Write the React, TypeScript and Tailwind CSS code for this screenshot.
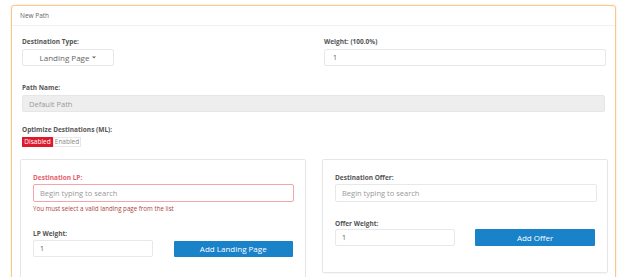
import { useState } from "react";

const Label = ({ children, error }: { children: React.ReactNode; error?: boolean }) => (
  <div className={`text-[6.5px] font-bold leading-[9px] ${error ? "text-[#e4606d]" : "text-[#555]"}`}>{children}</div>
);

const App = () => {
  const [ml, setMl] = useState(false);

  return (
    <div className="h-[277px] w-[623px] overflow-hidden bg-white pt-[5px] pl-[11px] pr-[7px] font-['Open_Sans',sans-serif]">
      <div className="h-[290px] rounded-[3px] border border-[#f9c88e] bg-white shadow-[0_0_2px_rgba(249,180,100,0.45)]">
        {/* header */}
        <div className="flex h-[20px] items-center border-b border-[#f0f0f0] px-[8px] text-[6.5px] text-[#666]">
          New Path
        </div>

        <div className="px-[10px] pt-[11px]">
          <div className="grid grid-cols-[292px_282px] gap-x-[10px]">
            <div>
              <Label>Destination Type:</Label>
              <button className="mt-[3px] flex h-[17px] w-[92px] items-center justify-center gap-[3px] rounded-[2px] border border-[#e8e8e8] bg-white text-[8px] text-[#666]">
                Landing Page
                <svg width="4" height="3" viewBox="0 0 4 3">
                  <path d="M0 0.5h4L2 2.5z" fill="#666" />
                </svg>
              </button>
            </div>
            <div>
              <Label>Weight: (100.0%)</Label>
              <input
                defaultValue="1"
                className="mt-[3px] block h-[17px] w-full rounded-[2px] border border-[#e8e8e8] px-[8px] text-[7px] text-[#555] outline-none"
              />
            </div>
          </div>

          <div className="mt-[17px]">
            <Label>Path Name:</Label>
            <input
              disabled
              defaultValue="Default Path"
              className="mt-[3px] block h-[17px] w-full rounded-[2px] border border-[#e6e6e6] bg-[#eeeeee] px-[6px] text-[7.5px] text-[#999] outline-none"
            />
          </div>

          <div className="mt-[13px]">
            <Label>Optimize Destinations (ML):</Label>
            <div className="mt-[3px] flex text-[6.5px] leading-none">
              <button
                onClick={() => setMl(false)}
                className={`flex h-[10px] w-[31px] items-center justify-center ${!ml ? "bg-[#e0182e] text-white" : "border border-[#e8e8e8] text-[#777]"}`}
              >
                Disabled
              </button>
              <button
                onClick={() => setMl(true)}
                className={`flex h-[10px] w-[28px] items-center justify-center ${ml ? "bg-[#1a82c9] text-white" : "border border-[#e8e8e8] text-[#888]"}`}
              >
                Enabled
              </button>
            </div>
          </div>

          <div className="-mx-[2px] mt-[12px] grid grid-cols-[286px_286px] gap-x-[16px]">
            {/* LP card */}
            <div className="h-[130px] rounded-[2px] border border-[#e6e6e6] px-[12px] pt-[13px] shadow-[0_1px_2px_rgba(0,0,0,0.04)]">
              <Label error>Destination LP:</Label>
              <input
                placeholder="Begin typing to search"
                className="mt-[2px] block h-[18px] w-[261px] rounded-[2px] border border-[#f2a5ad] px-[6px] text-[7.5px] text-[#555] placeholder:text-[#999] outline-none"
              />
              <div className="mt-[2px] text-[6.2px] leading-[9px] text-[#a94442]">
                You must select a valid landing page from the list
              </div>
              <div className="mt-[16px]">
                <Label>LP Weight:</Label>
                <div className="mt-[2px] flex items-center gap-[21px]">
                  <input
                    defaultValue="1"
                    className="block h-[17px] w-[120px] rounded-[2px] border border-[#e8e8e8] px-[6px] text-[7px] text-[#555] outline-none"
                  />
                  <button className="h-[16px] w-[120px] rounded-[1px] bg-[#1a82c9] text-[8px] text-white">
                    Add Landing Page
                  </button>
                </div>
              </div>
            </div>

            {/* Offer card */}
            <div className="h-[114px] rounded-[2px] border border-[#e6e6e6] px-[12px] pt-[13px] shadow-[0_1px_2px_rgba(0,0,0,0.04)]">
              <Label>Destination Offer:</Label>
              <input
                placeholder="Begin typing to search"
                className="mt-[2px] block h-[18px] w-[262px] rounded-[2px] border border-[#e8e8e8] px-[6px] text-[7.5px] text-[#555] placeholder:text-[#999] outline-none"
              />
              <div className="mt-[17px]">
                <Label>Offer Weight:</Label>
                <div className="mt-[1px] flex items-center gap-[20px]">
                  <input
                    defaultValue="1"
                    className="block h-[17px] w-[121px] rounded-[2px] border border-[#e8e8e8] px-[6px] text-[7px] text-[#555] outline-none"
                  />
                  <button className="h-[17px] w-[121px] rounded-[1px] bg-[#1a82c9] text-[8px] text-white">
                    Add Offer
                  </button>
                </div>
              </div>
            </div>
          </div>
        </div>
      </div>
    </div>
  );
};

export default App;
